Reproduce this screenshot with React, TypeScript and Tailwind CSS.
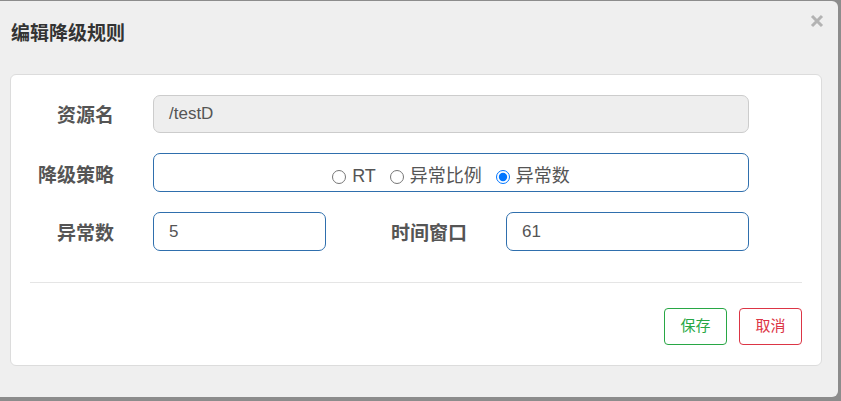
export default function App() {
  const font = { fontFamily: '"Liberation Sans", "Noto Sans CJK SC", sans-serif' };

  return (
    <div className="w-[841px] h-[401px] bg-[#8c8c8c] overflow-hidden" style={font}>
      <div className="mt-px w-[838px] h-[396px] bg-[#efefef] rounded-tr-[6px] rounded-br-[6px] relative">
        {/* header */}
        <div className="h-[73px] pl-[11px] pt-[21px]">
          <h3 className="text-[19px] leading-[24px] font-bold text-[#333]">编辑降级规则</h3>
        </div>
        <button className="absolute right-[14px] top-[13px] w-[14px] h-[14px]">
          <svg viewBox="0 0 14 14" width="14" height="14">
            <path d="M2 2 L12 12 M12 2 L2 12" stroke="#b3b3b3" strokeWidth="3" />
          </svg>
        </button>

        {/* body card */}
        <div className="ml-[10px] w-[812px] h-[292px] bg-white border border-[#dcdcdc] rounded-[6px]">
          <div className="pt-[20px] flex flex-col gap-[20px]">
            <div className="flex items-center h-[38px]">
              <label className="w-[103px] mt-[5px] text-right text-[19px] font-bold text-[#555]">资源名</label>
              <div className="ml-[39px] w-[596px] h-[38px] bg-[#eeeeee] border border-[#cccccc] rounded-[7px] flex items-center px-[15px] text-[17px] text-[#555]">
                /testD
              </div>
            </div>

            <div className="flex items-center h-[39px]">
              <label className="w-[103px] mt-[7px] text-right text-[19px] font-bold text-[#555]">降级策略</label>
              <div className="ml-[39px] w-[596px] h-[39px] border border-[#2f6fad] rounded-[7px] flex items-center justify-center gap-[14px] pt-[8px] text-[18px] text-[#555]">
                <label className="flex items-center gap-[6px]">
                  <input type="radio" name="grade" className="w-[14px] h-[14px] m-0" />
                  RT
                </label>
                <label className="flex items-center gap-[6px]">
                  <input type="radio" name="grade" className="w-[14px] h-[14px] m-0" />
                  异常比例
                </label>
                <label className="flex items-center gap-[6px]">
                  <input type="radio" name="grade" defaultChecked className="w-[14px] h-[14px] m-0" />
                  异常数
                </label>
              </div>
            </div>

            <div className="flex items-center h-[39px]">
              <label className="w-[103px] mt-[5px] text-right text-[19px] font-bold text-[#555]">异常数</label>
              <input
                defaultValue="5"
                className="ml-[39px] w-[173px] h-[39px] border border-[#2f6fad] rounded-[7px] px-[15px] text-[17px] text-[#555] outline-none"
              />
              <label className="w-[141px] mt-[5px] text-right text-[19px] font-bold text-[#555]">时间窗口</label>
              <input
                defaultValue="61"
                className="ml-[39px] w-[243px] h-[39px] border border-[#2f6fad] rounded-[7px] px-[15px] text-[17px] text-[#555] outline-none"
              />
            </div>
          </div>

          <div className="mx-[19px] mt-[31px] border-t border-[#e5e5e5]" />

          <div className="flex justify-end gap-[12px] mr-[19px] mt-[25px]">
            <button className="w-[63px] h-[37px] border border-[#28a745] rounded-[4px] text-[15px] text-[#28a745]">保存</button>
            <button className="w-[63px] h-[37px] border border-[#dc3545] rounded-[4px] text-[15px] text-[#dc3545]">取消</button>
          </div>
        </div>
      </div>
    </div>
  );
}
